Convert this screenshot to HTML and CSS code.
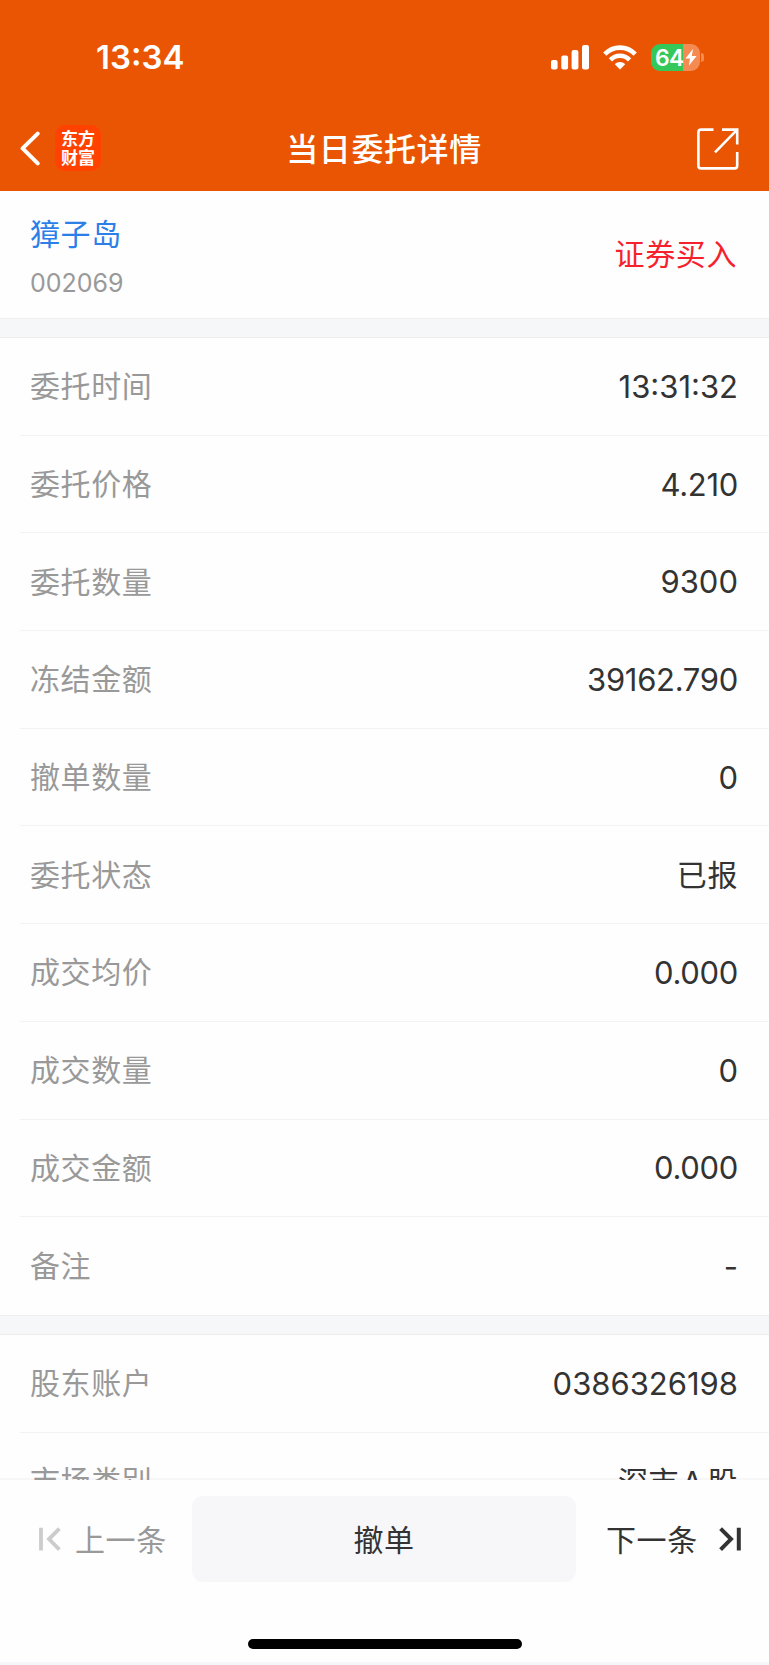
FILE: index.html
```html
<!DOCTYPE html>
<html lang="zh-CN">
  <head>
    <meta charset="UTF-8" />
    <meta name="viewport" content="width=device-width, initial-scale=1.0" />
    <title>当日委托详情</title>
    <link rel="stylesheet" href="styles.css">
  </head>

  <body>
    <header class="header">
      <div class="status">
        <span class="time">13:34</span>
        <div class="status-icons">
          <svg class="signal" width="38" height="25" viewBox="0 0 38 25" fill="#fff">
            <rect x="0" y="15" width="6.6" height="9.5" rx="2" />
            <rect x="10.3" y="10.5" width="6.8" height="14" rx="2" />
            <rect x="20.6" y="5" width="6.8" height="19.5" rx="2" />
            <rect x="31" y="0" width="7" height="24.5" rx="2" />
          </svg>
          <svg class="wifi" width="34" height="25" viewBox="0 0 34 25">
            <g fill="none" stroke="#fff" stroke-width="4.6">
              <path d="M1.8 9.2C10.2 0.4 23.8 0.4 32.2 9.2" />
              <path d="M7.4 14.8C12.8 9.4 21.2 9.4 26.6 14.8" />
            </g>
            <path d="M17 24.4L11.8 19.2C14.7 16.3 19.3 16.3 22.2 19.2Z" fill="#fff" />
          </svg>
          <div class="battery">
            <span>64</span>
            <svg width="12" height="17" viewBox="0 0 12 17" fill="#fff">
              <path d="M8 0L0.4 9.4H5L3.8 16.8L11.6 7H6.8Z" />
            </svg>
          </div>
          <i class="battery-cap"></i>
        </div>
      </div>
      <div class="nav">
        <div class="nav-left">
          <svg width="20" height="35" viewBox="0 0 20 35" fill="none" stroke="#fff" stroke-width="4" stroke-linecap="round" stroke-linejoin="round">
            <path d="M17.7 2.6L2.6 17.4L17.7 32.4" />
          </svg>
          <div class="logo">东方<br>财富</div>
        </div>
        <h1 class="title">当日委托详情</h1>
        <svg class="share" width="42" height="42" viewBox="0 0 42 42" fill="none" stroke="#fff" stroke-width="2.6">
          <path d="M16.5 1.6H4Q1.4 1.6 1.4 4.2V37.8Q1.4 40.4 4 40.4H37.6Q40.2 40.4 40.2 37.8V24" />
          <path d="M25 1.6H40.2V16.4M40.2 1.6L18 24.4" />
        </svg>
      </div>
    </header>

    <main class="main">
      <section class="stock">
        <div>
          <p class="name">獐子岛</p>
          <p class="code">002069</p>
        </div>
        <span class="side">证券买入</span>
      </section>

      <ul class="list">
        <li><span>委托时间</span><b>13:31:32</b></li>
        <li><span>委托价格</span><b class="dec">4.210</b></li>
        <li><span>委托数量</span><b>9300</b></li>
        <li><span>冻结金额</span><b class="dec">39162.790</b></li>
        <li><span>撤单数量</span><b>0</b></li>
        <li><span>委托状态</span><b class="cn">已报</b></li>
        <li><span>成交均价</span><b class="dec">0.000</b></li>
        <li><span>成交数量</span><b>0</b></li>
        <li><span>成交金额</span><b class="dec">0.000</b></li>
        <li><span>备注</span><b>-</b></li>
      </ul>

      <ul class="list">
        <li><span>股东账户</span><b>0386326198</b></li>
        <li><span>市场类别</span><b class="cn">深市<i>A</i>股</b></li>
      </ul>
    </main>

    <footer class="footer">
      <div class="actions">
        <div class="prev">
          <svg width="22" height="24" viewBox="0 0 22 24" fill="none" stroke="#ccc" stroke-width="3.8">
            <path d="M2 0.8V23.4M20.4 1.6L10 12.1L20.4 22.6" />
          </svg>
          <span>上一条</span>
        </div>
        <button class="cancel">撤单</button>
        <div class="next">
          <span>下一条</span>
          <svg width="22" height="24" viewBox="0 0 22 24" fill="none" stroke="#333" stroke-width="4">
            <path d="M19.8 0.8V23.4M1.6 1.6L12 12.1L1.6 22.6" />
          </svg>
        </div>
      </div>
      <div class="home"></div>
    </footer>
  </body>
</html>
```

FILE: styles.css
```css
* {
  box-sizing: border-box;
  margin: 0;
  padding: 0;
}

body {
  display: flex;
  flex-direction: column;
  height: 1665px;
  overflow: hidden;
  background: #fefefe;
  color: #333;
  font-family: Inter, "Noto Sans CJK SC", sans-serif;
  font-size: 30px;
  line-height: 44px;
}

svg {
  display: block;
  flex-shrink: 0;
}

/* header */
.header {
  height: 191px;
  flex-shrink: 0;
  background: #ea5504;
  color: #fff;
}

.status {
  display: flex;
  justify-content: space-between;
  align-items: center;
  height: 105px;
  padding: 10px 65px 0 96px;
}

.time {
  margin-top: -1px;
  font-size: 33px;
  font-weight: 600;
}

.status-icons {
  display: flex;
  align-items: center;
}

.wifi {
  margin: 0 14px;
}

.battery {
  display: flex;
  align-items: center;
  width: 49px;
  height: 27px;
  padding-left: 4px;
  border-radius: 9px;
  background: linear-gradient(90deg, #34c759 31.5px, #f38b53 31.5px);
  font-size: 23px;
  font-weight: 600;
  line-height: 28px;
  letter-spacing: -0.7px;
}

.battery svg {
  margin-left: 1px;
}

.battery-cap {
  width: 3px;
  height: 9px;
  margin-left: 1px;
  border-radius: 0 3px 3px 0;
  background: #f38b53;
}

.nav {
  display: grid;
  grid-template-columns: 1fr auto 1fr;
  align-items: center;
  height: 86px;
  padding: 0 30px 0 20px;
}

.nav-left {
  display: flex;
  align-items: center;
  gap: 15px;
}

.logo {
  width: 46px;
  height: 46px;
  padding-top: 3px;
  border-radius: 10px;
  background: #ff4200;
  font-family: "Noto Sans CJK SC", sans-serif;
  font-size: 17px;
  font-weight: 700;
  line-height: 19px;
  text-align: center;
}

.title {
  margin-right: -9px;
  padding-top: 3px;
  font-size: 32px;
  font-weight: 500;
  letter-spacing: 0.6px;
}

.share {
  justify-self: end;
  margin-top: 2px;
}

/* content */
.main {
  height: 1289px;
  flex-shrink: 0;
  overflow: hidden;
  background: linear-gradient(#f7f7f8, #f7f7f8) bottom / 100% 2px no-repeat;
}

.stock {
  display: flex;
  justify-content: space-between;
  align-items: center;
  height: 127px;
  padding: 0 32px 0 30px;
}

.name {
  padding-top: 6px;
  color: #2d7fe8;
  letter-spacing: 0.6px;
}

.code {
  margin-top: 7px;
  color: #999;
  font-size: 25px;
  line-height: 40px;
}

.side {
  margin-top: -2px;
  color: #f5222d;
  letter-spacing: 0.6px;
}

.list {
  list-style: none;
}

.list::before {
  content: "";
  display: block;
  height: 18px;
  border-top: 1px solid #efeff0;
  border-bottom: 1px solid #ededee;
  background: #f6f7f9;
}

.list li {
  display: flex;
  justify-content: space-between;
  align-items: center;
  height: 97.7px;
  margin-left: 20px;
  padding: 0 31px 0 10px;
  border-bottom: 1px solid #f3f3f4;
}

.list li:last-child {
  border-bottom: 0;
}

.list span {
  color: #999;
  letter-spacing: 0.6px;
}

.list b {
  padding-top: 1px;
  font-size: 31px;
  font-weight: 400;
}

.list .dec {
  letter-spacing: -0.3px;
}

.list .cn {
  font-size: 30px;
  letter-spacing: 0.6px;
}

.list i {
  margin: 0 4px 0 3px;
  font-style: normal;
}

/* bottom bar */
.footer {
  height: 185px;
  padding-top: 16px;
  border-bottom: 3px solid #f7f7f9;
}

.actions {
  display: grid;
  grid-template-columns: 192px 384px 193px;
  align-items: center;
  height: 86px;
}

.prev,
.next {
  display: flex;
  align-items: center;
  letter-spacing: 0.6px;
}

.prev span,
.next span {
  padding-top: 1px;
}

.prev {
  gap: 14px;
  padding-left: 39px;
  color: #999;
}

.next {
  justify-content: space-between;
  padding: 0 28px 0 30px;
}

.cancel {
  height: 86px;
  padding-top: 1px;
  border: 0;
  border-radius: 11px;
  background: #f7f7fa;
  color: #333;
  font: inherit;
  letter-spacing: 0.6px;
}

.home {
  width: 274px;
  height: 10px;
  margin: 57px auto 0;
  border-radius: 5px;
  background: #000;
}
```
